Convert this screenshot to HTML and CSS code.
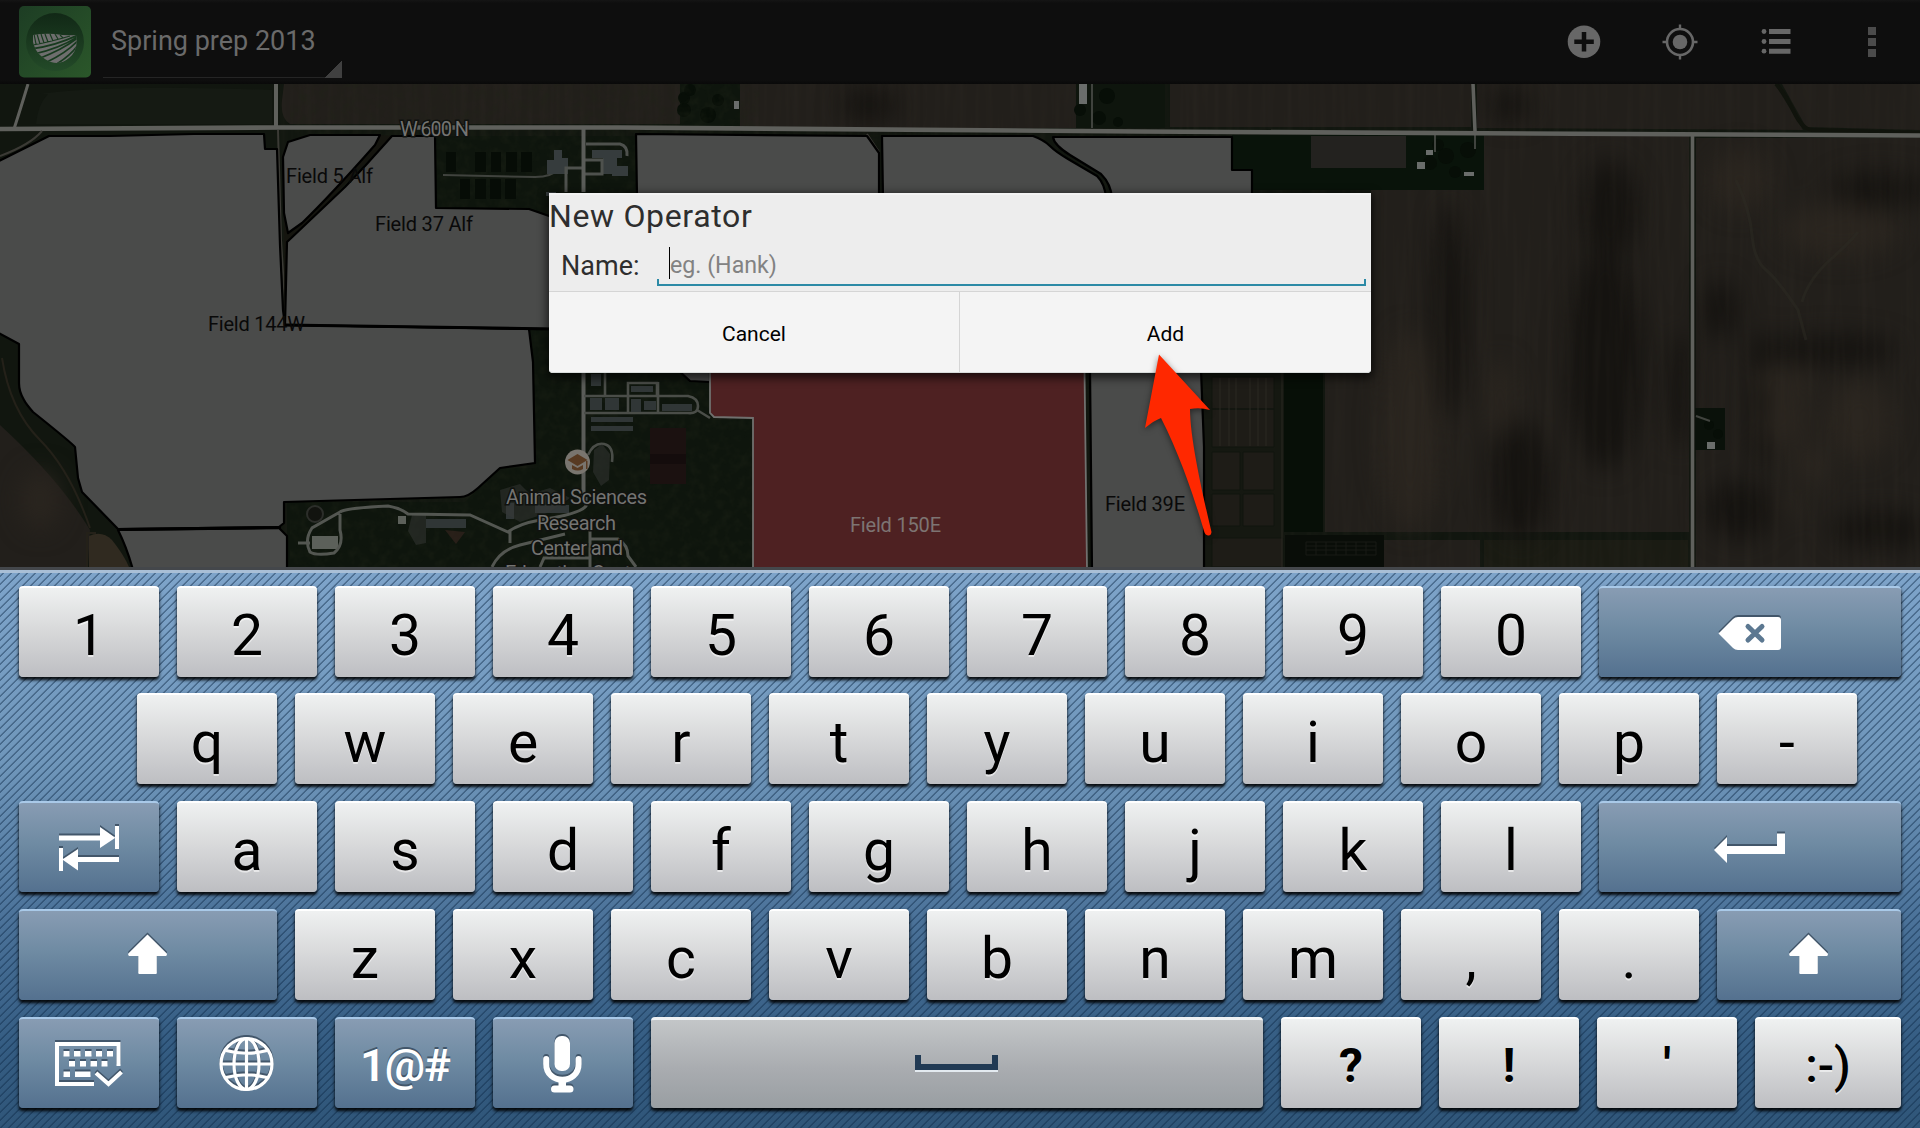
FILE: index.html
```html
<!DOCTYPE html>
<html lang="en">
<head>
<meta charset="utf-8">
<title>Spring prep 2013</title>
<link rel="stylesheet" href="styles.css">
</head>
<body>
<div class="screen">
  <header class="bar">
    <svg class="logo" viewBox="19 6 72 72">
      <defs>
        <linearGradient id="lg" x1="0" y1="0" x2="1" y2="1"><stop offset="0" stop-color="#1d3d24"/><stop offset="1" stop-color="#2b572a"/></linearGradient>
        <linearGradient id="lc" x1="0" y1="0" x2="0" y2="1"><stop offset="0" stop-color="#112816"/><stop offset="1" stop-color="#234a28"/></linearGradient>
        <clipPath id="hill"><path d="M33 35Q44 33 55 34Q66 36 76 35Q79 50 69 58Q61 65 51 62Q36 56 33 42Z"/></clipPath>
      </defs>
      <rect x="19" y="6" width="72" height="71.500" rx="5" fill="url(#lg)"/>
      <circle cx="55" cy="42" r="29" fill="url(#lc)"/>
      <g clip-path="url(#hill)">
        <rect x="30" y="30" width="50" height="36" fill="#6e6e6e"/>
        <g fill="none" stroke="#173a1e" stroke-width="1.700">
          <path d="M30 49Q55 46 78 35M34 54Q60 48 78 36.500M38 59Q62 50 77 38.500M45 63Q66 53 77 41.500M55 65Q70 56 78 45"/>
          <path stroke-width="1.200" d="M33 45Q50 42 70 36M36 44L34 34M40 44L37 34M44 43L41 34M48 42L45 34M53 41L50 34M58 39L55 34M63 38L60 35"/>
        </g>
      </g>
    </svg>
    <div class="spinner"><span>Spring prep 2013</span></div>
    <nav class="actions">
      <svg viewBox="1559 18 48 48"><circle cx="1583" cy="41.800" r="16.300" fill="#676767"/><path d="M1583 32v19.500M1573.300 41.700h19.500" stroke="#0e0e0e" stroke-width="4.500"/></svg>
      <svg viewBox="1656 18 48 48"><circle cx="1680" cy="42" r="13" fill="none" stroke="#676767" stroke-width="2.600"/><circle cx="1680" cy="42" r="7.300" fill="#676767"/><path d="M1680 24.500v5M1680 54.500v5M1662.500 42h5M1692.500 42h5" stroke="#676767" stroke-width="2.400"/></svg>
      <svg viewBox="1752 18 48 48" fill="#676767"><path d="M1769 29h21.500v5h-21.500zM1769 39h21.500v5h-21.500zM1769 48.700h21.500v5h-21.500z"/><circle cx="1764" cy="31.500" r="2.400"/><circle cx="1764" cy="41.500" r="2.400"/><circle cx="1764" cy="51.200" r="2.400"/></svg>
      <svg viewBox="1848 18 48 48" fill="#4b4b4b"><path d="M1868 27h8v8h-8zM1868 38h8v8h-8zM1868 49h8v8h-8z"/></svg>
    </nav>
  </header>

  <main class="stage">
    <svg class="map" viewBox="0 84 1920 483" preserveAspectRatio="none">
      <defs>
        <filter id="blur" x="-10%" y="-10%" width="120%" height="120%" color-interpolation-filters="sRGB"><feGaussianBlur stdDeviation="12"/></filter>
        <filter id="grain" x="0" y="0" width="100%" height="100%" color-interpolation-filters="sRGB"><feTurbulence type="fractalNoise" baseFrequency="0.150 0.008" numOctaves="2" seed="4"/><feColorMatrix values="0 0 0 0 0.220  0 0 0 0 0.200  0 0 0 0 0.170  1.200 0 0 0 -0.450"/></filter>
        <filter id="leaf" x="0" y="0" width="100%" height="100%" color-interpolation-filters="sRGB"><feTurbulence type="fractalNoise" baseFrequency="0.100" numOctaves="3" seed="9"/><feColorMatrix values="0 0 0 0 0.120  0 0 0 0 0.140  0 0 0 0 0.090  1.600 0 0 0 -0.650"/></filter>
      </defs>
      <rect x="0" y="84" width="1920" height="483" fill="#11160f"/>
      <!-- ploughed ground -->
      <g fill="#221f1b">
        <path d="M284 84H693V124H290Q280 118 282 100Z"/>
        <path d="M740 84H1076V128H740Z"/>
        <path d="M1170 84H1471V127H1170Z"/>
        <path d="M1477 84H1775L1803 130L1477 128Z"/><path d="M1782 84H1920V130L1806 127Z"/>
        <path d="M1484 136H1689V532H1325V373H1371V190H1484Z"/>
        <path d="M1696 138H1920V567H1696Z"/>
        <path d="M1384 540H1480V567H1384Z"/>
        <path d="M0 425Q60 480 90 530L88 567H0Z"/>
      </g>
      <path d="M1484 540H1688V567H1484Z" fill="#1a1b13"/>
      <path d="M40 94Q110 84 272 90V124H36Q38 104 48 94Z" fill="#151a13"/>
      <g filter="url(#blur)">
        <g fill="#151310"><ellipse cx="1450" cy="310" rx="16" ry="110"/><ellipse cx="1610" cy="210" rx="28" ry="50"/><ellipse cx="1605" cy="360" rx="38" ry="110"/><ellipse cx="1520" cy="480" rx="30" ry="60"/><ellipse cx="1680" cy="390" rx="12" ry="60"/><ellipse cx="1760" cy="400" rx="14" ry="70"/><ellipse cx="1830" cy="350" rx="70" ry="16"/><ellipse cx="1740" cy="510" rx="35" ry="30"/><ellipse cx="1880" cy="190" rx="50" ry="18"/><ellipse cx="1510" cy="105" rx="22" ry="16"/><ellipse cx="870" cy="105" rx="30" ry="16"/><ellipse cx="1720" cy="310" rx="18" ry="30"/><ellipse cx="1880" cy="530" rx="50" ry="20"/></g>
        <g fill="#2a251f"><ellipse cx="1410" cy="430" rx="30" ry="100"/><ellipse cx="1500" cy="400" rx="14" ry="40"/><ellipse cx="1785" cy="380" rx="32" ry="16"/><ellipse cx="1860" cy="420" rx="34" ry="40"/><ellipse cx="1785" cy="420" rx="25" ry="28"/><ellipse cx="1810" cy="465" rx="20" ry="20"/><ellipse cx="1790" cy="505" rx="18" ry="9"/><ellipse cx="1840" cy="230" rx="60" ry="26"/><ellipse cx="1740" cy="180" rx="30" ry="30"/><ellipse cx="40" cy="500" rx="20" ry="30"/></g>
      </g>
      <rect x="280" y="84" width="1640" height="483" filter="url(#grain)" opacity=".3"/>
      <path d="M1736 180Q1750 210 1752 235T1766 270T1798 310L1806 340M1802 302Q1808 280 1830 260T1858 232" fill="none" stroke="#2b2923" stroke-width="3" opacity=".55"/>
      <path d="M1776 84Q1786 95 1794 112T1812 130L1920 133" fill="none" stroke="#10130c" stroke-width="4"/>
      <!-- grass and trees -->
      <g fill="#0e150d">
        <path d="M693 84H740V126H680V84Z"/><path d="M1076 84H1165V128H1076Z"/>
        <path d="M1232 135H1484V190H1232Z" fill="#09130a"/>
        <path d="M1283 373H1323V532H1283Z" fill="#070f07"/><path d="M1285 535H1384V567H1285Z" fill="#090d08"/>
        <path d="M1695 408H1725V450H1695Z" fill="#0a110a"/>
        <path d="M436 136H636V215H436Z"/>
        <path d="M529 329H712V420H753V567H287V502H465L500 468H535Z"/>
      </g>
      <path d="M1204 373H1284V567H1204Z" fill="#151811"/>
      <path d="M1212 377h62v32h-62zM1212 409h62v38h-62zM1212 452h28v38h-28zM1243 452h31v38h-31zM1212 494h28v32h-28zM1243 494h31v32h-31zM1212 538h71v29h-71z" fill="#1e1c17" stroke="#11150e"/>
      <path d="M1220 378v68M1229 378v68M1236 378v68M1250 378v68M1258 378v68M1266 378v68M1282 373V567" stroke="#2a2922" stroke-width="1"/>
      <path d="M1311 136h95v32h-95z" fill="#23221f"/>
      <path d="M1306 542h70v13h-70zM1306 546h70M1306 550h70M1316 542v13M1326 542v13M1336 542v13M1346 542v13M1356 542v13M1366 542v13" fill="none" stroke="#181b15"/>
      <g fill="#070e07"><circle cx="1438" cy="145" r="6"/><circle cx="1446" cy="156" r="8"/><circle cx="1468" cy="150" r="8"/><circle cx="1430" cy="163" r="7"/><circle cx="1455" cy="172" r="6"/><circle cx="684" cy="110" r="7"/><circle cx="684" cy="98" r="6"/><circle cx="708" cy="115" r="8"/><circle cx="718" cy="100" r="6"/><circle cx="1080" cy="110" r="6"/><circle cx="1107" cy="96" r="8"/><circle cx="1099" cy="118" r="7"/><circle cx="1118" cy="122" r="5"/><circle cx="690" cy="90" r="6"/><circle cx="1709" cy="425" r="5"/><circle cx="1718" cy="434" r="5"/></g>
      <rect x="290" y="84" width="470" height="483" filter="url(#leaf)" opacity=".55"/>
      <g fill="#6a6d6b"><path d="M1426 150h7v5h-7zM1417 162h8v7h-8zM1464 172h10v4h-10zM1079 84h8v20h-8zM734 101h5v8h-5zM1707 442h8v7h-8z"/></g>
      <g fill="none" stroke="#40433e" stroke-width="2"><path d="M1435 134v18M1475 134v15M1092 84v44M1696 416l14 5M443 175L535 177Q552 177 560 168H584"/></g>
      <!-- plots and farm buildings -->
      <g fill="#060c06"><path d="M446 152h10v20h-10zM475 152h11v20h-11zM491 152h10v20h-10zM506 152h11v20h-11zM521 152h11v20h-11zM460 179h10v20h-10zM475 179h11v20h-11zM490 179h11v20h-11zM505 179h11v20h-11z"/></g>
      <g fill="#363c3d"><path d="M547 160h7v-10h8v8h6v16h-21zM592 150h30v8h-30zM603 158h14v16h-14zM612 166h16v10h-16zM546 192h10v4h-10z"/></g>
      <g fill="none" stroke="#4e514d" stroke-width="3"><path d="M566 192V168H584M584 160H602V174H584M586 144H620Q628 146 627 156"/></g>
      <g fill="none" stroke="#5a5c58" stroke-width="4"><path d="M583.500 127V192M583.500 373V500"/></g>
      <g fill="none" stroke="#4a4d48" stroke-width="2.600"><path d="M584 396H688Q698 398 698 406T688 413H584M605 373V396M628 396V413M658 382V413M628 395V383H657V396M697 410L710 418M588 455Q594 442 604 444T612 462"/></g>
      <g fill="#303636"><path d="M590 398h12v12h-12zM605 398h14v12h-14zM631 399h10v13h-10zM644 401h12v9h-12zM662 404h30v7h-30zM591 417h42v5h-42zM591 426h42v5h-42zM591 374h10v12h-10zM631 386h22v6h-22zM426 519h40v9h-40zM535 505h34v8h-34zM506 503h8v16h-8z"/></g>
      <path d="M312 536h26v13h-26zM398 516h8v8h-8z" fill="#5c605a"/>
      <path d="M650 428h36v26h-36zM650 464h36v20h-36z" fill="#1b1110"/><path d="M650 454h36v10h-36z" fill="#140c0c"/>
      <g fill="#363735"><path d="M594 450l8-6 8 10-1 26-8 6-8-14zM500 490l20-6 10 10 20-6 20 10-20 14-30 10-18-10zM412 515h14v28l-10 2-8-14z" opacity=".5"/></g>
      <path d="M445 530l20 2-9 12z" fill="#33231e" opacity=".7"/>
      <g fill="none" stroke="#535651" stroke-width="3"><path d="M340 512Q345 508 388 506Q400 508 408 514L470 515Q490 524 508 532Q518 524 540 520Q580 514 586 506V497M510 531V543M492 567Q500 550 520 545L565 534M340 512L312 528Q304 540 310 552Q316 556 334 553Q344 545 340 530V514M298 543h12M590 530V567M590 539H618Q628 545 628 556L636 567M540 567L544 558H590"/></g>
      <circle cx="315" cy="514" r="8" fill="#12130f" stroke="#2c2e2a" stroke-width="2"/>
      <path d="M89 536Q102 530 112 540Q124 555 129 567H89Z" fill="#302a20"/>
      <path d="M87 567V533H96M2 358Q10 410 40 440T90 528" fill="none" stroke="#242119" stroke-width="2"/>
      <!-- roads -->
      <g fill="none" stroke="#5f605c"><path d="M28 84Q22 104 14 129" stroke-width="3"/><path d="M276 84V128" stroke-width="4"/><path d="M1473 84L1475 131M1692.500 134V567" stroke-width="3.600"/><path d="M0 129L280 127.500L620 127.500L1140 131.500L1920 135.500" stroke-width="4.600"/></g>
      <g fill="none" stroke="#3b3a35" stroke-width="2"><path d="M278 130L281 240L286 320M0 156Q30 145 42 131M867 134L879 152"/></g>
      <!-- field boundaries -->
      <path d="M380 135L375 145L302 223L288 233L284 213V320L287 243L392 136Z" fill="#15150f"/>
      <g fill="#4a4b4a" stroke="#000" stroke-width="2.200" stroke-linejoin="round">
        <path d="M-3 162L49 136L110 136L194 134H264L265 149H277L280 245L283 310L285 325L529 329L533 362L535 463L500 468L478 488Q468 497 460 497L284 502V523L279 527L118 529L82 492L78 478L75 447Q73 444 33 412Q26 404 24 400Q19 392 19 383V344L-3 332Z"/>
        <path d="M118 530L279 528L287 536V570H133Q127 548 118 530Z"/>
        <path d="M288 142L310 135H380L375 145Q330 196 302 223L288 233L284 213L283 157Z"/>
        <path d="M392 136L435 136L436 208L529 209L552 217V329L285 325L287 242L345 187L365 166Z"/>
        <path d="M636 134L867 136L879 153V198H637Z"/>
        <path d="M882 136L1033 136Q1044 140 1050 146T1068 159L1097 176Q1105 184 1106 198H883Z"/>
        <path d="M1053 137H1232V170H1252V198H1112Q1111 184 1101 174L1070 155Q1054 145 1053 137Z"/>
        <path d="M678 370L690 381L710 382V370Z"/>
        <path d="M1090 370H1201L1204 447V570H1092Z"/>
      </g>
      <path d="M285 325L552 329" stroke="#000" stroke-width="3"/>
      <path d="M118 529.500L281 527.500" stroke="#000" stroke-width="3"/>
      <path d="M710 370V413L714 417L753 418V570H1087L1084.500 370Z" fill="#4e2122" stroke="#70706e" stroke-width="1.800"/>
      <!-- place marker -->
      <circle cx="577.500" cy="462" r="12.500" fill="#79756f"/>
      <path d="M577.500 454l10 6-10 6-10-6zM572 465l5.500 3 5.500-3v4q-5 3-11 0zM586 461h1.500v8h-1.500z" fill="#583a22"/>
      <!-- labels -->
      <g class="label-dark">
        <text x="286" y="183" textLength="87">Field 5 Alf</text>
        <text x="375" y="231" textLength="98">Field 37 Alf</text>
        <text x="208" y="331" textLength="97">Field 144W</text>
        <text x="1105" y="511" textLength="80">Field 39E</text>
      </g>
      <text class="label-red" x="850" y="532" textLength="91">Field 150E</text>
      <g class="label-light">
        <text x="400" y="136" textLength="69">W 600 N</text>
        <text x="506" y="504" textLength="141">Animal Sciences</text>
        <text x="537" y="530" textLength="79">Research</text>
        <text x="531" y="555" textLength="92">Center and</text>
        <text x="505" y="580" textLength="142">Education Center</text>
      </g>
    </svg>

    <section class="dialog">
      <div class="dialog-body">
        <h1>New Operator</h1>
        <div class="form-row"><label>Name:</label><div class="input"><i class="caret"></i><span>eg. (Hank)</span></div></div>
      </div>
      <div class="buttons"><div class="button">Cancel</div><div class="button">Add</div></div>
    </section>
    <svg class="arrow" viewBox="1135 344 90 202"><path d="M1159 354.500L1210 410Q1200 407 1190 409C1190 440 1204 500 1211.500 532Q1211 536 1208 535.500Q1205 535 1204 531C1195 500 1180 455 1161 418Q1155 420 1145 428Z" fill="#ff2800"/></svg>
  </main>

  <section class="keyboard">
    <div class="row">
      <div class="key">1</div><div class="key">2</div><div class="key">3</div><div class="key">4</div><div class="key">5</div><div class="key">6</div><div class="key">7</div><div class="key">8</div><div class="key">9</div><div class="key">0</div>
      <div class="key fn grow"><svg viewBox="1599 586 302 91"><path d="M1718.500 633.500L1733 619Q1735 617 1738 617H1778Q1781 617 1781 620V647Q1781 650 1778 650H1738Q1735 650 1733 648Z" fill="#fff"/><path class="cut" d="M1748 626.500l14 13.500M1762 626.500l-14 13.500"/></svg></div>
    </div>
    <div class="row row-q">
      <div class="key">q</div><div class="key">w</div><div class="key">e</div><div class="key">r</div><div class="key">t</div><div class="key">y</div><div class="key">u</div><div class="key">i</div><div class="key">o</div><div class="key">p</div><div class="key">-</div>
    </div>
    <div class="row">
      <div class="key fn"><svg viewBox="19 801 140 91" fill="#fff"><path d="M59 835.500h41V827l15 10.500V826h4v23h-4V838L100 848v-7.500H59zM59 848h4v11l15-10v8h41v5H78v8.500L63 860v11h-4z"/></svg></div>
      <div class="key">a</div><div class="key">s</div><div class="key">d</div><div class="key">f</div><div class="key">g</div><div class="key">h</div><div class="key">j</div><div class="key">k</div><div class="key">l</div>
      <div class="key fn grow"><svg viewBox="1599 801 302 91" fill="#fff"><path d="M1714 850l13-13v9h50v-12.500h8V854h-58v9z"/></svg></div>
    </div>
    <div class="row">
      <div class="key fn shift-left"><svg viewBox="19 909 258 91" fill="#fff"><path d="M147.500 934.500l19.300 19q.5 2.500-1 2.500h-9v17q0 1-1 1h-16.500q-1 0-1-1v-17h-9q-1.500 0-1-2.500z"/></svg></div>
      <div class="key">z</div><div class="key">x</div><div class="key">c</div><div class="key">v</div><div class="key">b</div><div class="key">n</div><div class="key">m</div><div class="key">,</div><div class="key">.</div>
      <div class="key fn grow"><svg viewBox="1717 909 184 91" fill="#fff"><path d="M1808.500 934.500l19.300 19q.5 2.500-1 2.500h-9v17q0 1-1 1h-16.500q-1 0-1-1v-17h-9q-1.500 0-1-2.500z"/></svg></div>
    </div>
    <div class="row">
      <div class="key fn"><svg viewBox="19 1017 140 91"><path d="M94 1084H57V1044H118.500V1066M96 1073l12.500 11L121.500 1072" fill="none" stroke="#fff" stroke-width="4"/><path fill="#fff" d="M63.500 1051h6v5.500h-6zM74 1051h6.500v5.500h-6.500zM85 1051h6.500v5.500h-6.500zM96 1051h6v5.500h-6zM107 1051h6v5.500h-6zM69 1061h6v5.500h-6zM80 1061h6v5.500h-6zM90.500 1061h6.500v5.500h-6.500zM101.500 1061h6v5.500h-6zM63.500 1071.500h6.500v5.500h-6.500zM75 1071.500h15.500v5.500h-15.500z"/></svg></div>
      <div class="key fn"><svg viewBox="177 1017 140 91" fill="none" stroke="#fff" stroke-width="3.200"><circle cx="246.500" cy="1064" r="25.500"/><ellipse cx="246.500" cy="1064" rx="12.500" ry="25.500"/><path d="M246.500 1038.500v51M221 1064h51M226 1050.500Q246.500 1056 267 1050.500M226 1077.500Q246.500 1072 267 1077.500"/></svg></div>
      <div class="key fn symbols">1@#</div>
      <div class="key fn"><svg viewBox="493 1017 140 91"><rect x="554.500" y="1036" width="15.500" height="35" rx="7" fill="#fff"/><path d="M546.200 1059V1064C546.200 1085 578.600 1085 578.600 1064V1059" fill="none" stroke="#fff" stroke-width="6" stroke-linecap="round"/><path d="M558.500 1080h7.500v5.500h4a3.500 3.500 0 0 1 0 7h-15.500a3.500 3.500 0 0 1 0-7h4z" fill="#fff"/></svg></div>
      <div class="key space"><svg viewBox="651 1017 612 91"><path d="M915 1070h83v2h-83z" fill="#e3eaf0"/><path d="M918 1055v12h77v-12" fill="none" stroke="#213a54" stroke-width="6"/></svg></div>
      <div class="key punct">?</div><div class="key punct">!</div><div class="key punct">'</div><div class="key punct smile">:-)</div>
    </div>
  </section>
</div>
</body>
</html>
```
FILE: styles.css
```css
* { box-sizing: border-box; }
body { margin: 0; background: #0e0e0e; font-family: Roboto, "Liberation Sans", sans-serif; }
.screen { display: flex; flex-direction: column; width: 1920px; height: 1128px; overflow: hidden; }

.bar { display: flex; height: 84px; padding: 6px 24px 6px 19px; background: linear-gradient(#151515, #0e0e0e 3px 80px, #090909); }
.logo { width: 72px; height: 72px; }
.spinner { display: flex; align-items: center; width: 239px; height: 72px; margin-left: 12px; padding: 0 0 2px 8px; color: #6a6a6a; font-size: 27px; white-space: nowrap;
  background: linear-gradient(135deg, transparent 50%, #404040 50%) right 0 bottom 0 / 18px 18px no-repeat, linear-gradient(#252525, #252525) bottom / 100% 1px no-repeat; }
.actions { display: flex; gap: 48px; align-items: flex-start; margin-left: auto; padding-top: 12px; }
.actions svg { width: 48px; height: 48px; }

.stage { position: relative; height: 483px; }
.map { display: block; width: 1920px; height: 483px; }
.map text { font-size: 20px; }
.label-dark { fill: #090909; }
.label-red { fill: #7d7472; }
.label-light { fill: #747472; stroke: #10120f; stroke-width: 3px; paint-order: stroke; }

.dialog { position: absolute; left: 549px; top: 109px; width: 822px; height: 180px; background: #ededed; border-radius: 1px 1px 4px 4px; box-shadow: 0 3px 10px 2px rgba(0, 0, 0, .65); color: #2e2e2e; }
.dialog-body { height: 99px; border-top: 2px solid #f3f3f3; border-bottom: 1px solid #d5d5d5; }
.dialog h1 { margin: 0; font-size: 32px; line-height: 43px; font-weight: 400; letter-spacing: .65px; }
.form-row { display: flex; align-items: flex-start; padding: 0 5px 0 12px; }
.form-row label { width: 96px; padding-top: 2px; font-size: 27px; line-height: 52px; }
.input { display: flex; align-items: flex-start; width: 709px; height: 48px; padding: 9px 0 0 12px; color: #828282; font-size: 23.2px; line-height: 33px;
  background: linear-gradient(#2c8aa6, #2c8aa6) left bottom / 2px 7px no-repeat, linear-gradient(#2c8aa6, #2c8aa6) right bottom / 2px 7px no-repeat, linear-gradient(#2c8aa6, #2c8aa6) left bottom / 100% 2px no-repeat; }
.caret { width: 1px; height: 32px; background: #000; }
.input span { padding-top: 2px; }
.buttons { display: flex; height: 81px; border-radius: 0 0 4px 4px; background: #f4f4f4; border-bottom: 1px solid #d8dcdb; }
.button { width: 410px; color: #000; font-size: 21px; line-height: 84px; text-align: center; }
.button + .button { width: 412px; border-left: 1px solid #d5d5d5; }
.arrow { position: absolute; left: 1135px; top: 260px; width: 90px; height: 202px; filter: drop-shadow(0 2px 3px rgba(0, 0, 0, .5)); }

.keyboard { display: flex; flex-direction: column; gap: 17px; height: 561px; padding: 16px 19px 0; border-top: 3px solid #44474b;
  background: linear-gradient(#a9bfd6, #a9bfd6) top / 100% 3px no-repeat,
    repeating-linear-gradient(135deg, transparent 0 3.400px, rgba(14, 42, 72, .42) 4.200px 5.200px, transparent 5.657px),
    linear-gradient(#7ea4ca, #6f96ba 35%, #4c739a 62%, #355d83 85%, #305679); }
.row { display: flex; gap: 18px; height: 91px; flex: none; }
.row-q { margin-top: -1px; padding-left: 118px; }
.key { display: flex; justify-content: center; align-items: center; flex: none; width: 140px; height: 91px; padding-top: 6px; border-top: 2px solid #fff; border-radius: 4px; color: #000; font-size: 57px; line-height: 1; text-shadow: 0 2px 0 rgba(255, 255, 255, .55);
  background: linear-gradient(#eff1f1, #d9dadb 45%, #bdbec2); box-shadow: 0 3px 3px rgba(0, 0, 0, .85), 0 2px 5px rgba(0, 0, 0, .3); }
.key svg { width: 100%; height: 91px; margin: -8px 0 0; filter: drop-shadow(0 -2px 0 #42566a); }
.fn { background: linear-gradient(#889cb3, #6f8ba3 45%, #54718f); border-color: #a9c9e8; }
.cut { fill: none; stroke: #5c7891; stroke-width: 5; stroke-linecap: round; }
.grow { flex: 1; }
.shift-left { width: 258px; }
.space { width: 612px; background: linear-gradient(#c3c6c8, #a9acb0 55%, #999ea2); border-top: 3px solid #eef1f3; }
.key.space svg { filter: none; margin-top: -9px; }
.symbols { padding-top: 4px; color: #fff; font-size: 45px; font-weight: 600; letter-spacing: -1px; text-shadow: 0 -2px 0 #42566a; }
.punct { padding-top: 5px; font-size: 48px; font-weight: 700; }
.smile { flex: 1; font-weight: 500; }
```
